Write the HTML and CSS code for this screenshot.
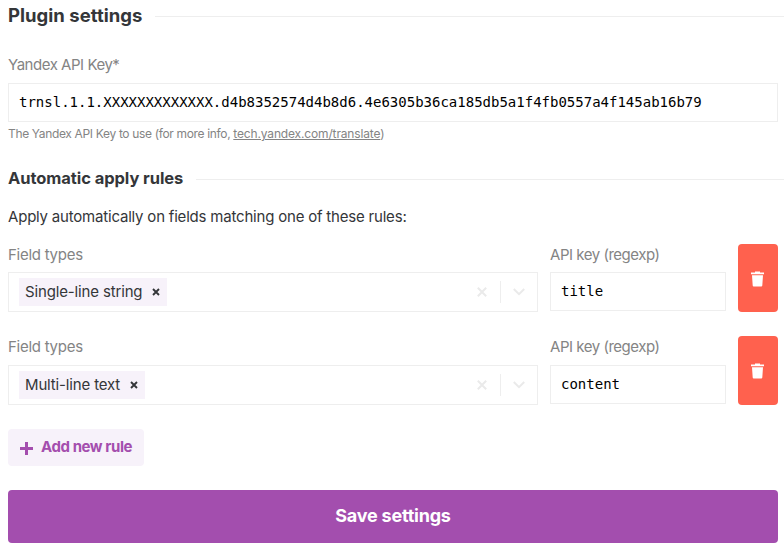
FILE: index.html
```html
<!DOCTYPE html>
<html lang="en">
<head>
<meta charset="utf-8">
<title>Plugin settings</title>
<link rel="stylesheet" href="styles.css">
</head>
<body>
<form class="settings">
  <h2 class="heading heading-main"><span>Plugin settings</span></h2>
  <div class="field">
    <label class="label label-key">Yandex API Key*</label>
    <div class="input">trnsl.1.1.XXXXXXXXXXXXX.d4b8352574d4b8d6.4e6305b36ca185db5a1f4fb0557a4f145ab16b79</div>
    <p class="hint">The Yandex API Key to use (for more info, <a>tech.yandex.com/translate</a>)</p>
  </div>
  <h3 class="heading heading-rules"><span>Automatic apply rules</span></h3>
  <p class="intro">Apply automatically on fields matching one of these rules:</p>
  <div class="rule">
    <div class="types">
      <label class="label label-types">Field types</label>
      <div class="select">
        <span class="tag"><span class="tag-single">Single-line string</span><svg class="tag-x" viewBox="0 0 8 8"><path d="M1 1l6 6M7 1L1 7"/></svg></span>
        <svg class="clear" viewBox="0 0 10 10"><path d="M.8.8l8.4 8.4M9.2.8L.8 9.2"/></svg>
        <span class="divider"></span>
        <svg class="chevron" viewBox="0 0 12 8"><path d="M.8 1L6 6.2 11.2 1"/></svg>
      </div>
    </div>
    <div class="key">
      <label class="label label-regexp">API key (regexp)</label>
      <div class="input">title</div>
    </div>
    <button type="button" class="remove" aria-label="Remove"><svg viewBox="0 0 13 16"><path d="M0 1.5h4V.6h5v.9h4v1.8H0zM1 4.3h11l-.7 10.2q-.1 1-1 1H2.7q-.9 0-1-1z"/></svg></button>
  </div>
  <div class="rule rule-second">
    <div class="types">
      <label class="label label-types">Field types</label>
      <div class="select">
        <span class="tag"><span class="tag-multi">Multi-line text</span><svg class="tag-x" viewBox="0 0 8 8"><path d="M1 1l6 6M7 1L1 7"/></svg></span>
        <svg class="clear" viewBox="0 0 10 10"><path d="M.8.8l8.4 8.4M9.2.8L.8 9.2"/></svg>
        <span class="divider"></span>
        <svg class="chevron" viewBox="0 0 12 8"><path d="M.8 1L6 6.2 11.2 1"/></svg>
      </div>
    </div>
    <div class="key">
      <label class="label label-regexp">API key (regexp)</label>
      <div class="input">content</div>
    </div>
    <button type="button" class="remove" aria-label="Remove"><svg viewBox="0 0 13 16"><path d="M0 1.5h4V.6h5v.9h4v1.8H0zM1 4.3h11l-.7 10.2q-.1 1-1 1H2.7q-.9 0-1-1z"/></svg></button>
  </div>
  <button type="button" class="add"><svg viewBox="0 0 13 13"><path d="M6.5 0v13M0 6.5h13"/></svg><span>Add new rule</span></button>
  <button type="button" class="save"><span>Save settings</span></button>
</form>
</body>
</html>
```
FILE: styles.css
```css
* { box-sizing: border-box; }
body {
  margin: 0;
  background: #fff;
  color: #343639;
  font: 15px/20px Inter, "Liberation Sans", sans-serif;
}
h2, h3, p { margin: 0; }
button { border: 0; padding: 0; font: inherit; }
svg { display: block; flex: none; fill: none; stroke: currentColor; }
.settings { padding: 5px 6px 0 8px; }
.heading {
  display: flex;
  align-items: center;
  gap: 13px;
  height: 22px;
  margin-right: -6px;
  font-weight: 700;
}
.heading::after { content: ""; flex: 1; height: 1px; background: #eee; }
.heading-main span { margin-top: -3px; }
.heading-main { font-size: 18.5px; letter-spacing: .03px; }
.heading-rules { font-size: 16.5px; margin-top: 24px; letter-spacing: -.07px; }
.heading-rules span { margin-top: -2px; }
.label { display: block; height: 20px; color: #848484; white-space: nowrap; }
.label-key { letter-spacing: -.47px; }
.label-types { letter-spacing: -.27px; }
.label-regexp { letter-spacing: -.47px; }
.field { margin-top: 28px; }
.field .label { margin-bottom: 8px; }
.input {
  height: 39px;
  border: 1px solid #eee;
  padding: 0 10px;
  color: #000;
  font: 14px/37px "DejaVu Sans Mono", monospace;
  white-space: nowrap;
}
.hint { height: 20px; margin-top: 2px; color: #848484; font-size: 12px; letter-spacing: -.34px; }
.hint a { text-decoration: underline; letter-spacing: -.15px; }
.intro { margin-top: 17px; height: 20px; letter-spacing: -.2px; }
.rule { display: flex; gap: 12px; height: 68px; margin-top: 17px; }
.rule-second { height: 69px; margin-top: 24px; }
.types { width: 530px; }
.key { width: 176px; }
.rule .label { margin: 1px 0 7px; }
.rule-second .label { margin-bottom: 8px; }
.select {
  display: flex;
  align-items: center;
  height: 40px;
  border: 1px solid #eee;
  padding-left: 10px;
  padding-right: 12px;
  color: #eaeaea;
}
.tag {
  display: flex;
  align-items: center;
  gap: 10px;
  height: 28px;
  padding: 0 7px 0 6px;
  margin-right: auto;
  background: #f7f2fa;
  color: #343639;
}
.tag-single { letter-spacing: -.15px; }
.tag-multi { letter-spacing: -.15px; }
.tag-x { width: 8px; height: 8px; stroke-width: 1.9; }
.clear { width: 10px; height: 10px; stroke-width: 2; }
.divider { width: 1px; height: 22px; margin: 0 12px 0 13px; background: #eee; }
.chevron { width: 12px; height: 8px; stroke-width: 2; }
.remove {
  display: flex;
  align-items: center;
  justify-content: center;
  width: 40px;
  border-radius: 4px;
  background: #ff614e;
  color: #fff;
}
.remove svg { width: 13px; height: 16px; fill: currentColor; stroke: none; margin: 1px 1px 0 0; }
.add {
  display: flex;
  align-items: center;
  gap: 8px;
  width: 136px;
  height: 37px;
  margin-top: 24px;
  padding-left: 12px;
  border-radius: 4px;
  background: #f7f2fa;
  color: #a44eae;
  font-weight: 700;
  letter-spacing: -.42px;
  white-space: nowrap;
}
.add svg { width: 13px; height: 13px; margin-top: 2px; stroke-width: 3; }
.add span { margin-top: -1px; }
.save {
  width: 100%;
  height: 53px;
  display: block;
  margin-top: 24px;
  padding-bottom: 1px;
  border-radius: 4px;
  background: #a34eae;
  color: #fff;
  font-size: 18px;
  font-weight: 700;
  letter-spacing: -.22px;
}
```
